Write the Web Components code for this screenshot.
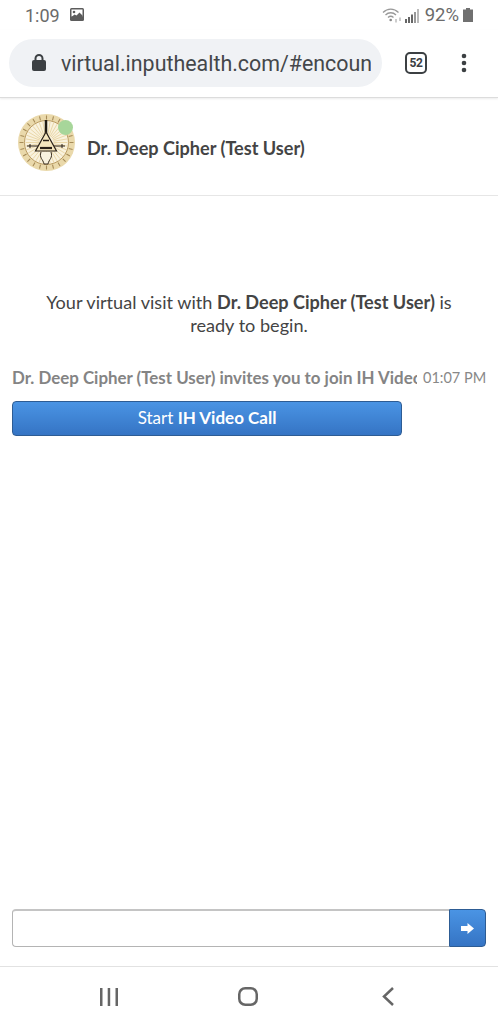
<!DOCTYPE html>
<html>
<head>
<meta charset="utf-8">
<style>
  html, body { margin: 0; height: 100%; background: #fff; }
  body { display: flex; flex-direction: column; height: 1024px; overflow: hidden; font-family: Lato, sans-serif; }
</style>
</head>
<body>
<status-bar></status-bar>
<browser-bar url="virtual.inputhealth.com/#encoun" tabs="52"></browser-bar>
<chat-header name="Dr. Deep Cipher (Test User)"></chat-header>
<chat-body>
  <visit-intro>Your virtual visit with <b>Dr. Deep Cipher (Test User)</b> is ready to begin.</visit-intro>
  <invite-line time="01:07 PM">Dr. Deep Cipher (Test User) invites you to join IH Video Call</invite-line>
  <call-button>Start <b>IH Video Call</b></call-button>
</chat-body>
<chat-input></chat-input>
<nav-bar></nav-bar>

<script>
// small helper, every element gets an open shadow root with its own style
const define = (name, html, attrs) => {
  customElements.define(name, class extends HTMLElement {
    constructor () {
      super()
      this.attachShadow({ mode: 'open' })
    }

    connectedCallback () {
      let out = html
      for (const a of attrs || []) out = out.split('{' + a + '}').join(this.getAttribute(a) || '')
      this.shadowRoot.innerHTML = out
    }
  })
}

// sun rays and rim ticks of the avatar badge
const spokes = (count, from, to) => {
  let d = ''
  for (let i = 0; i < count; i++) {
    const a = i / count * Math.PI * 2
    const c = Math.cos(a)
    const s = Math.sin(a)
    d += `M${(28.5 + c * from).toFixed(1)} ${(28.5 + s * from).toFixed(1)}L${(28.5 + c * to).toFixed(1)} ${(28.5 + s * to).toFixed(1)}`
  }
  return d
}

define('status-bar', `
<style>
  :host { display: flex; align-items: center; height: 30px; padding: 0 25px 0 25px; box-sizing: border-box; font: 18px Roboto, sans-serif; color: #6b6b6b; flex: none; }
  .pic { margin-left: 10px; margin-top: -2px; }
  .right { margin-left: auto; display: flex; align-items: center; }
  .pct { margin: 0 4px 0 6px; font-size: 18.5px; }
</style>
<span>1:09</span>
<svg class="pic" width="14" height="13" viewBox="0 0 14 13"><rect width="14" height="13" rx="1.500" fill="#5c5c5c"/><rect x="1.500" y="1.500" width="11" height="7" fill="#fff"/><circle cx="4" cy="4" r="1.300" fill="#5c5c5c"/><path fill="#5c5c5c" d="M1.500 9l3-2.500 2 1 3-3 3 3V10h-11z"/></svg>
<span class="right">
  <svg width="20" height="16" viewBox="0 0 20 16" fill="none" stroke="#999" stroke-width="1.300"><path d="M1 5.500c4.500-4.500 11-4.500 15.500 0"/><path d="M3.500 8c3-3 7.500-3 10.500 0"/><path d="M6 10.500c1.700-1.500 3.800-1.500 5.500 0"/><circle cx="8.700" cy="13" r="1.300" fill="#888" stroke="none"/><path d="M14 12v3.500M18 10.500v3.500" stroke-width="1"/></svg>
  <svg width="14" height="14" viewBox="0 0 14 14" fill="#666" style="margin-left:3px;margin-top:2px"><rect x="0" y="10" width="2" height="4"/><rect x="3" y="8" width="2" height="6"/><rect x="6" y="5.500" width="2" height="8.500"/><rect x="9" y="3" width="2" height="11" fill="#999"/><rect x="12" y="0" width="2" height="14" fill="#bbb"/></svg>
  <span class="pct">92%</span>
  <svg width="10" height="14" viewBox="0 0 10 14"><path fill="#707070" d="M3 0h4v1.500h3V14H0V1.500h3z"/></svg>
</span>
`)

define('browser-bar', `
<style>
  :host { display: flex; align-items: center; height: 68px; padding: 0 0 0 9px; box-sizing: border-box; flex: none; border-bottom: 1px solid #dcdcdc; box-shadow: 0 1px 2px rgba(0,0,0,.08); position: relative; }
  .pill { width: 373px; height: 48px; border-radius: 24px; background: #f0f2f5; display: flex; align-items: center; box-sizing: border-box; padding: 0 11px 0 23px; margin-top: -2px; }
  .url { margin: 2px 0 0 15px; font: 21.400px Roboto, sans-serif; color: #44474a; white-space: nowrap; overflow: hidden; flex: 1; }
  .tabs { margin-left: 23px; width: 22px; height: 22px; box-sizing: border-box; border: 2.500px solid #3c4043; border-radius: 5px; font: bold 12px Roboto, sans-serif; letter-spacing: -.4px; color: #3c4043; display: flex; align-items: center; justify-content: center; flex: none; margin-top: -2px; }
  .more { margin-left: 34px; margin-top: -2px; }
</style>
<div class="pill">
  <svg width="14" height="17" viewBox="0 0 14 17"><path fill="none" stroke="#3c4043" stroke-width="2" d="M3.500 7V4.500a3.500 3.500 0 0 1 7 0V7"/><rect y="6" width="14" height="11" rx="2" fill="#3c4043"/></svg>
  <span class="url">{url}</span>
</div>
<span class="tabs">{tabs}</span>
<svg class="more" width="6" height="20" viewBox="0 0 6 20" fill="#3c4043"><circle cx="3" cy="3" r="2.300"/><circle cx="3" cy="10" r="2.300"/><circle cx="3" cy="17" r="2.300"/></svg>
`, ['url', 'tabs'])

define('chat-header', `
<style>
  :host { display: flex; align-items: center; height: 98px; box-sizing: border-box; padding: 0 0 9px 18px; border-bottom: 1px solid #e6e6e6; flex: none; }
  .avatar { position: relative; width: 57px; height: 57px; flex: none; }
  .dot { position: absolute; top: 6px; right: 2px; width: 15px; height: 15px; border-radius: 50%; background: #a7d69a; }
  .name { margin-left: 12px; margin-top: 12px; font: bold 18.100px Lato, sans-serif; color: #444; }
</style>
<div class="avatar">
  <svg width="57" height="57" viewBox="0 0 57 57">
    <circle cx="28.500" cy="28.500" r="28.500" fill="#ead9ab"/>
    <circle cx="28.500" cy="28.500" r="22" fill="#f9f2de"/>
    <path d="${spokes(36, 7, 21)}" stroke="#ead7a8" stroke-width="1"/>
    <path d="${spokes(24, 23, 27)}" stroke="#a68b58" stroke-width="1.100"/>
    <circle cx="28.500" cy="28.500" r="22" fill="none" stroke="#bb9c63" stroke-width="1"/>
    <path d="M28 6v20" stroke="#1f1a12" stroke-width="2.500"/>
    <path d="M28 18L17.500 37h21z" fill="#f5e6bd" stroke="#2a2118" stroke-width="1.200"/>
    <path d="M9 32h11M36 32h11M12 30v4M44 30v4" stroke="#2a2118" stroke-width="1"/>
    <path d="M25 26.500h6" stroke="#2a2118" stroke-width="1.500"/>
    <path d="M22 34h12" stroke="#2a2118" stroke-width="2.200"/>
    <path d="M23 38c-2 6 2 7 3 12h4c1-5 5-6 3-12" fill="#f9f2de" stroke="#3a2f20" stroke-width="1"/>
  </svg>
  <span class="dot"></span>
</div>
<span class="name">{name}</span>
`, ['name'])

define('chat-body', `
<style>
  :host { display: block; flex: 1; box-sizing: border-box; padding: 95px 12px 0; }
</style>
<slot></slot>
`)

define('visit-intro', `
<style>
  :host { display: block; padding: 0 30px; text-align: center; font: 18.100px/22.500px Lato, sans-serif; color: #444; }
</style>
<slot></slot>
`)

define('invite-line', `
<style>
  :host { display: flex; align-items: center; margin-top: 29px; height: 24px; }
  .msg { width: 405px; margin-right: 6px; overflow: hidden; white-space: nowrap; font: bold 16.900px Lato, sans-serif; color: #848484; flex: none; }
  .time { font: 14.500px Lato, sans-serif; color: #888; white-space: nowrap; }
</style>
<span class="msg"><slot></slot></span>
<span class="time">{time}</span>
`, ['time'])

define('call-button', `
<style>
  :host { display: flex; align-items: center; justify-content: center; width: 390px; height: 35px; margin-top: 12px; padding-bottom: 3px; box-sizing: border-box; border: 1px solid #2d5c94; border-radius: 4px; background: linear-gradient(#4a94e4, #3574c4); color: #fff; font: 17px Lato, sans-serif; white-space: pre; }
</style>
<slot></slot>
`)

define('chat-input', `
<style>
  :host { display: flex; height: 38px; margin: 0 12px 19px 12px; flex: none; }
  .field { flex: 1; box-sizing: border-box; border: 1px solid #b4b4b4; border-right: 0; border-top: 2px solid #c4c4c4; border-radius: 4px 0 0 4px; background: #fff; }
  .send { width: 37px; box-sizing: border-box; border: 1px solid #2d5c94; border-radius: 0 4px 4px 0; background: linear-gradient(#4a94e4, #3574c4); display: flex; align-items: center; justify-content: center; }
</style>
<div class="field"></div>
<div class="send">
  <svg width="13" height="11" viewBox="0 0 13 11"><path fill="#fff" d="M0 3h6.500V0L13 5.500 6.500 11V8H0z"/></svg>
</div>
`)

define('nav-bar', `
<style>
  :host { display: flex; align-items: center; height: 58px; box-sizing: border-box; border-top: 1px solid #e2e2e2; padding: 2px 0 0 100px; flex: none; }
  svg { display: block; }
  .home { margin-left: 120px; }
  .back { margin-left: 124px; }
</style>
<svg width="18" height="18" viewBox="0 0 18 18" fill="#666"><rect x="0" width="2.500" height="18"/><rect x="7.700" width="2.500" height="18"/><rect x="15.500" width="2.500" height="18"/></svg>
<svg class="home" width="20" height="19" viewBox="0 0 20 19"><rect x="1.250" y="1.250" width="17.500" height="16.500" rx="6" fill="none" stroke="#666" stroke-width="2.500"/></svg>
<svg class="back" width="12" height="19" viewBox="0 0 12 19"><path d="M11 1L2 9.500 11 18" fill="none" stroke="#666" stroke-width="2.500"/></svg>
`)
</script>
</body>
</html>
